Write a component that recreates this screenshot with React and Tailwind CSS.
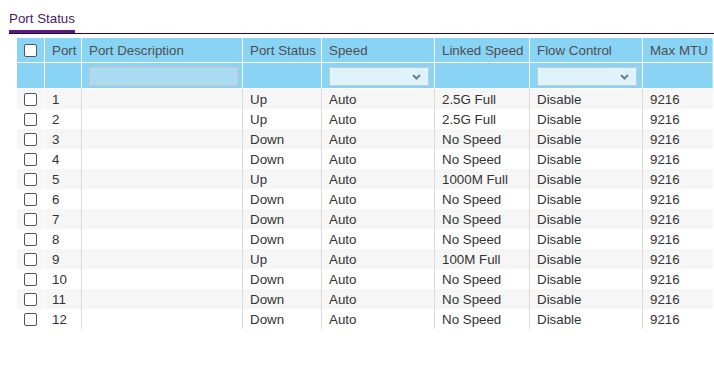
import React from "react";

const ports = [
  { port: 1, status: "Up", linked: "2.5G Full" },
  { port: 2, status: "Up", linked: "2.5G Full" },
  { port: 3, status: "Down", linked: "No Speed" },
  { port: 4, status: "Down", linked: "No Speed" },
  { port: 5, status: "Up", linked: "1000M Full" },
  { port: 6, status: "Down", linked: "No Speed" },
  { port: 7, status: "Down", linked: "No Speed" },
  { port: 8, status: "Down", linked: "No Speed" },
  { port: 9, status: "Up", linked: "100M Full" },
  { port: 10, status: "Down", linked: "No Speed" },
  { port: 11, status: "Down", linked: "No Speed" },
  { port: 12, status: "Down", linked: "No Speed" },
];

function Box() {
  return (
    <div className="w-[13px] h-[13px] rounded-[2px] border border-[#555] bg-white" />
  );
}

function Select() {
  return (
    <div className="ml-[7px] w-[100px] h-[19px] bg-[#def3fc] border border-[#c6ccd0] flex items-center justify-end pr-[7px]">
      <svg width="9" height="6" viewBox="0 0 9 6">
        <path d="M1 1l3.5 3.5L8 1" fill="none" stroke="#6b7f8a" strokeWidth="2" />
      </svg>
    </div>
  );
}

export default function App() {
  const head = "h-full flex items-center pl-[7px] pt-px border-r border-white";
  const cell = "h-full flex items-center pl-[7px] pt-px border-r border-[#dadada]";

  return (
    <div className="w-[714px] h-[384px] bg-white overflow-hidden text-[13.33px]" style={{ fontFamily: '"Liberation Sans", Arial, sans-serif' }}>
      {/* tab */}
      <div className="ml-[9px] pt-[11px] border-b border-[#24053c]">
        <div className="w-fit pb-[3px] border-b-[3px] border-[#5a1a82] text-[#4b1a6c] leading-[16px]">
          Port Status
        </div>
      </div>

      <div className="ml-[17px] mt-[4px] w-[696px]">
        {/* header */}
        <div className="flex h-[25px] bg-[#89d3f5] border-b border-white text-[#4f4f4f]">
          <div className="w-[28px] h-full flex items-center justify-center border-r border-white pr-px">
            <Box />
          </div>
          <div className={`w-[37px] ${head}`}>Port</div>
          <div className={`w-[161px] ${head}`}>Port Description</div>
          <div className={`w-[79px] ${head}`}>Port Status</div>
          <div className={`w-[113px] ${head}`}>Speed</div>
          <div className={`w-[95px] ${head}`}>Linked Speed</div>
          <div className={`w-[113px] ${head}`}>Flow Control</div>
          <div className="flex-1 h-full flex items-center pl-[7px] pt-px border-r border-[#b5e3f8]">Max MTU</div>
        </div>

        {/* filter row */}
        <div className="flex h-[26px] bg-[#89d3f5] border-b border-white">
          <div className="w-[28px] h-full border-r border-white" />
          <div className="w-[37px] h-full border-r border-white" />
          <div className="w-[161px] h-full border-r border-white flex items-center pt-[2px]">
            <div className="ml-[7px] w-[149px] h-[19px] bg-[#a9dcf3] border border-[#d3c5c5]" />
          </div>
          <div className="w-[79px] h-full border-r border-white" />
          <div className="w-[113px] h-full border-r border-white flex items-center pt-[2px]">
            <Select />
          </div>
          <div className="w-[95px] h-full border-r border-white" />
          <div className="w-[113px] h-full border-r border-white flex items-center pt-[2px]">
            <Select />
          </div>
          <div className="flex-1 h-full border-r border-[#b5e3f8]" />
        </div>

        {/* rows */}
        {ports.map((p, i) => (
          <div key={p.port} className={`flex h-[20px] text-[#333] ${i % 2 === 0 ? "bg-[#f6f6f6]" : "bg-white"}`}>
            <div className="w-[28px] h-full flex items-center justify-center border-r border-white pr-px">
              <Box />
            </div>
            <div className={`w-[37px] ${cell}`}>{p.port}</div>
            <div className={`w-[161px] ${cell}`}></div>
            <div className={`w-[79px] ${cell}`}>{p.status}</div>
            <div className={`w-[113px] ${cell}`}>Auto</div>
            <div className={`w-[95px] ${cell}`}>{p.linked}</div>
            <div className={`w-[113px] ${cell}`}>Disable</div>
            <div className="flex-1 h-full flex items-center pl-[7px] pt-px">9216</div>
          </div>
        ))}
      </div>
    </div>
  );
}
